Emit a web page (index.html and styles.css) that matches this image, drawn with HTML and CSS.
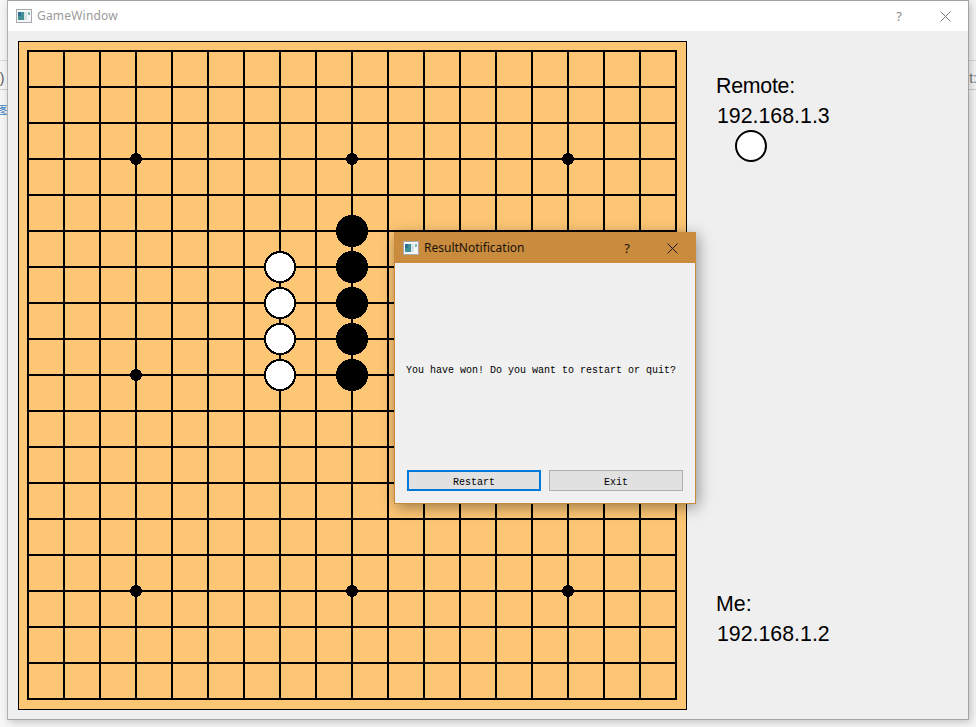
FILE: index.html
```html
<!DOCTYPE html>
<html lang="en">
<head>
  <meta charset="UTF-8">
  <title>GameWindow</title>
  <link rel="stylesheet" href="styles.css">
</head>
<body>

  <!-- bits of the desktop showing round the window -->
  <div class="backdrop">
    <span class="backdrop-text left-paren">0)</span>
    <span class="backdrop-text left-glyph">图</span>
    <span class="backdrop-text right-text">t:</span>
  </div>

  <div class="window">
    <div class="titlebar">
      <svg class="app-icon" width="16" height="14" viewBox="0 0 16 14">
        <rect x="0.5" y="0.5" width="15" height="13" fill="#f4f6f8" stroke="#a9a9ad"/>
        <rect x="2" y="3" width="6" height="8" fill="#3f8f95"/>
        <rect x="2" y="3" width="3" height="4" fill="#2f6f8f"/>
        <rect x="8" y="3" width="3" height="8" fill="#d6e6e6"/>
        <rect x="12" y="3" width="2" height="3" fill="#7fb8b0"/>
      </svg>
      <span class="window-title">GameWindow</span>
      <span class="help">?</span>
      <svg class="close" width="11" height="11" viewBox="0 0 11 11">
        <path d="M0.5 0.5L10.5 10.5M10.5 0.5L0.5 10.5" stroke="#777" fill="none"/>
      </svg>
    </div>

    <div class="content">
      <svg class="board" width="669" height="669" viewBox="0 0 669 669">
        <rect x="0.5" y="0.5" width="668" height="668" fill="#fdc675" stroke="#000"/>
        <path class="grid" d="M10 10V658M46 10V658M82 10V658M118 10V658M154 10V658M190 10V658M226 10V658M262 10V658M298 10V658M334 10V658M370 10V658M406 10V658M442 10V658M478 10V658M514 10V658M550 10V658M586 10V658M622 10V658M658 10V658
          M9 10H659M9 46H659M9 82H659M9 118H659M9 154H659M9 190H659M9 226H659M9 262H659M9 298H659M9 334H659M9 370H659M9 406H659M9 442H659M9 478H659M9 514H659M9 550H659M9 586H659M9 622H659M9 658H659"/>
        <circle class="star" cx="118" cy="118" r="6"/>
        <circle class="star" cx="334" cy="118" r="6"/>
        <circle class="star" cx="550" cy="118" r="6"/>
        <circle class="star" cx="118" cy="334" r="6"/>
        <circle class="star" cx="334" cy="334" r="6"/>
        <circle class="star" cx="550" cy="334" r="6"/>
        <circle class="star" cx="118" cy="550" r="6"/>
        <circle class="star" cx="334" cy="550" r="6"/>
        <circle class="star" cx="550" cy="550" r="6"/>
        <circle class="stone-black" cx="334" cy="190" r="16"/>
        <circle class="stone-black" cx="334" cy="226" r="16"/>
        <circle class="stone-black" cx="334" cy="262" r="16"/>
        <circle class="stone-black" cx="334" cy="298" r="16"/>
        <circle class="stone-black" cx="334" cy="334" r="16"/>
        <circle class="stone-white" cx="262" cy="226" r="15"/>
        <circle class="stone-white" cx="262" cy="262" r="15"/>
        <circle class="stone-white" cx="262" cy="298" r="15"/>
        <circle class="stone-white" cx="262" cy="334" r="15"/>
      </svg>

      <div class="side">
        <div class="player">
          <div class="player-line remote-label">Remote:</div>
          <div class="player-line player-ip">192.168.1.3</div>
          <svg class="turn-stone" width="32" height="32" viewBox="0 0 32 32">
            <circle cx="16" cy="16" r="15" fill="#fff" stroke="#000" stroke-width="2"/>
          </svg>
        </div>
        <div class="player">
          <div class="player-line">Me:</div>
          <div class="player-line player-ip">192.168.1.2</div>
        </div>
      </div>
    </div>
  </div>

  <div class="dialog">
    <div class="dialog-titlebar">
      <svg class="dialog-icon" width="16" height="14" viewBox="0 0 16 14">
        <rect x="0.5" y="0.5" width="15" height="13" fill="#f4f6f8" stroke="#a9a9ad"/>
        <rect x="2" y="3" width="6" height="8" fill="#3f8f95"/>
        <rect x="2" y="3" width="3" height="4" fill="#2f6f8f"/>
        <rect x="8" y="3" width="3" height="8" fill="#d6e6e6"/>
        <rect x="12" y="3" width="2" height="3" fill="#7fb8b0"/>
      </svg>
      <span class="dialog-title">ResultNotification</span>
      <span class="dialog-help">?</span>
      <svg class="dialog-close" width="11" height="11" viewBox="0 0 11 11">
        <path d="M0.5 0.5L10.5 10.5M10.5 0.5L0.5 10.5" stroke="#1a1a1a" fill="none"/>
      </svg>
    </div>
    <div class="dialog-body">
      <div class="message">You have won! Do you want to restart or quit?</div>
      <div class="buttons">
        <button class="btn btn-default">Restart</button>
        <button class="btn">Exit</button>
      </div>
    </div>
  </div>

</body>
</html>
```

FILE: styles.css
```css
html, body {
  margin: 0;
  height: 100%;
  overflow: hidden;
}
body {
  background: #f6f6f6;
  font-family: "Liberation Sans", Arial, sans-serif;
  position: relative;
}

.backdrop {
  position: absolute;
  left: 0;
  right: 0;
  top: 60px;
  height: 28px;
  border-top: 1px solid #d8d8d8;
  border-bottom: 1px solid #d0d0d0;
}
.backdrop-text {
  position: absolute;
  color: #555;
  font-size: 14px;
  line-height: 16px;
}
.left-paren {
  left: -8px;
  top: 9px;
}
.left-glyph {
  left: -3px;
  top: 41px;
  color: #3b7fc4;
  font-size: 12px;
  font-family: "Noto Sans CJK SC", sans-serif;
}
.right-text {
  right: -1px;
  top: 9px;
  color: #777;
}

.window {
  position: relative;
  box-sizing: border-box;
  width: 962px;
  height: 720px;
  margin-left: 7px;
  border: 1px solid #a3a3a3;
  border-left-color: #b0b0b0;
  background: #efefef;
  box-shadow: 2px 2px 8px rgba(0, 0, 0, 0.22);
}
.titlebar {
  display: flex;
  align-items: center;
  height: 30px;
  background: #fff;
  padding-left: 8px;
}
.app-icon {
  flex: none;
}
.window-title {
  margin: -2px 0 0 5px;
  font-family: "Noto Sans", sans-serif;
  font-size: 12px;
  letter-spacing: 0.2px;
  color: #9a9a9a;
}
.help {
  margin: -1px 0 0 auto;
  font-family: "Noto Sans", sans-serif;
  font-size: 13px;
  color: #888;
}
.close {
  margin: 0 17px 0 38px;
}

.content {
  display: flex;
  padding: 10px 0 0 10px;
}
.board {
  flex: none;
  display: block;
  shape-rendering: crispEdges;
}
.grid {
  fill: none;
  stroke: #000;
  stroke-width: 2;
}
.star {
  fill: #000;
}
.stone-black {
  fill: #000;
}
.stone-white {
  fill: #fff;
  stroke: #000;
  stroke-width: 2;
}

.side {
  display: flex;
  flex-direction: column;
  justify-content: space-between;
  height: 578px;
  margin-left: 29px;
  padding-top: 30px;
}
.player-line {
  font-size: 21.33px;
  line-height: 30px;
  color: #000;
}
.remote-label {
  letter-spacing: -0.25px;
}
.player-ip {
  margin-left: 1px;
}
.turn-stone {
  display: block;
  margin: -1px 0 0 19px;
}

.dialog {
  position: absolute;
  left: 394px;
  top: 232px;
  box-sizing: border-box;
  width: 302px;
  height: 272px;
  display: flex;
  flex-direction: column;
  border: 1px solid #c98a3c;
  background: #f0f0f0;
  box-shadow: 2px 3px 14px rgba(0, 0, 0, 0.4);
}
.dialog-titlebar {
  display: flex;
  align-items: center;
  flex: none;
  height: 30px;
  background: #c98b3e;
  padding-left: 8px;
}
.dialog-icon {
  flex: none;
}
.dialog-title {
  margin: -2px 0 0 5px;
  font-family: "Noto Sans", sans-serif;
  font-size: 12px;
  color: #1a1208;
}
.dialog-help {
  margin: -1px -1px 0 auto;
  font-family: "Noto Sans", sans-serif;
  font-size: 13px;
  color: #1a1208;
}
.dialog-close {
  margin: 0 17px 0 38px;
}
.dialog-body {
  flex: 1;
  display: flex;
  flex-direction: column;
  padding: 0 12px 12px;
}
.message {
  flex: 1;
  display: flex;
  align-items: center;
  margin-left: -1px;
  padding-top: 7px;
  font-family: "Liberation Mono", monospace;
  font-size: 10px;
  color: #000;
  white-space: nowrap;
}
.buttons {
  display: flex;
  gap: 8px;
}
.btn {
  box-sizing: border-box;
  width: 134px;
  height: 21px;
  padding: 3px 0 0;
  border: 1px solid #adadad;
  border-radius: 0;
  background: #e1e1e1;
  font-family: "Liberation Mono", monospace;
  font-size: 10px;
  color: #000;
}
.btn-default {
  border: 2px solid #0078d7;
}
```
